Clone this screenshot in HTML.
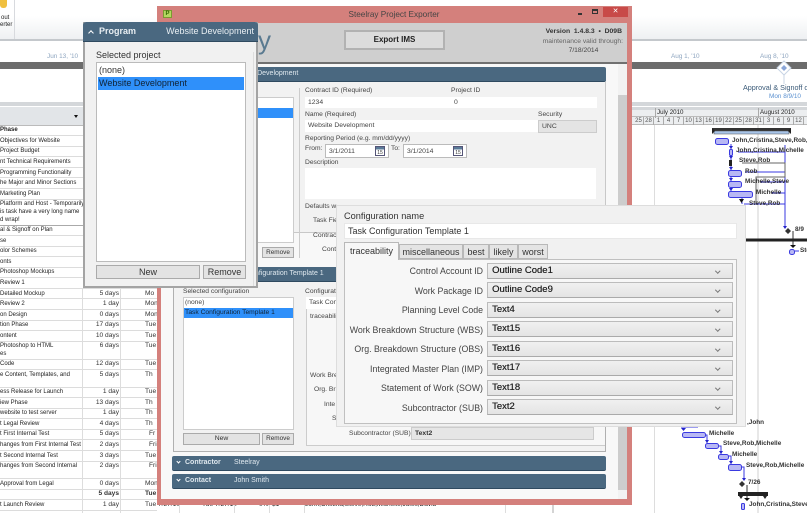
<!DOCTYPE html>
<html><head><meta charset="utf-8"><style>
html,body{margin:0;padding:0}
body{width:807px;height:513px;position:relative;overflow:hidden;background:#fff;font-family:"Liberation Sans",sans-serif;color:#333}
div{position:absolute;box-sizing:border-box;white-space:nowrap}
#all{left:0;top:0;width:807px;height:513px;filter:blur(.35px);overflow:hidden}
.t{font-size:6px;line-height:10px;height:10px;color:#222}
.d{font-size:6.6px;line-height:10px;height:10px;color:#333;width:50px;left:69px;text-align:right}
.s{font-size:6.6px;line-height:10px;height:10px;color:#333;left:145px}
.h{left:0;width:157px;height:1px;background:#dcdcdc}
.g{font-size:6.4px;line-height:10px;color:#333;font-weight:bold}
.c{font-size:6px;line-height:8px;color:#555;text-align:center;width:10px;top:117px;height:8px;border-right:1px solid #aaa}
.l{font-size:6.7px;line-height:10px;height:10px;color:#444}
.inp{background:#fff;font-size:6.8px;line-height:11px;color:#444;padding-left:3px}
.sec{background:#4a6880;border-radius:2px;border-bottom:1px solid #2f4a60;color:#dfe8ee;font-size:7px;line-height:14px}
.btn{background:#e3e3e3;border:1px solid #aaa;text-align:center;color:#333}
.cl{font-size:8.8px;line-height:14px;height:14px;color:#444;text-align:right;left:333px;width:150px}
.dd{left:487px;width:246px;height:16px;background:linear-gradient(#f0f0f0,#e4e4e4);border:1px solid #bcbcbc;border-bottom-color:#aaa;font-size:9.5px;line-height:13px;color:#222;padding-left:4px;text-shadow:.25px 0 0 #333}
.dd:after{content:"";position:absolute;right:13px;top:5px;width:2.5px;height:2.5px;border-right:1px solid #777;border-bottom:1px solid #777;transform:rotate(45deg)}
.tab{top:244px;height:15px;background:#e4e4e4;border:1px solid #b8b8b8;font-size:9px;line-height:14px;color:#333;text-align:center}
.chev{width:4px;height:4px;border-right:1.500px solid #fff;border-bottom:1.500px solid #fff;transform:rotate(45deg)}
</style></head><body><div id="all">

<!-- ribbon -->
<div style="left:0;top:0;width:807px;height:39px;background:linear-gradient(#fff 40%,#eef0f2)"></div>
<div style="left:14px;top:0;width:1px;height:39px;background:#d8dade"></div>
<div style="left:0;top:39px;width:807px;height:2px;background:#c4c8cc"></div>
<div style="left:0;top:0;width:7px;height:8px;background:#f0c040;border-radius:0 0 3px 3px"></div>
<div class="t" style="left:1px;top:13px;font-size:6px">out</div>
<div class="t" style="left:0;top:20px;font-size:6px">erter</div>

<!-- timeline -->
<div style="left:0;top:62px;width:807px;height:7px;background:#6c6c6c"></div>
<div class="t" style="left:47px;top:52px;color:#8fa6c0;font-size:6.4px">Jun 13, '10</div>
<div class="t" style="left:671px;top:52px;color:#8fa6c0;font-size:6.4px">Aug 1, '10</div>
<div class="t" style="left:760px;top:52px;color:#8fa6c0;font-size:6.4px">Aug 8, '10</div>
<div style="left:0;top:102px;width:807px;height:4px;background:#d4d7da"></div>
<div class="t" style="left:743px;top:83px;color:#3a5a78;font-size:7.2px">Approval &amp; Signoff o</div>
<div class="t" style="left:769px;top:92px;color:#5a90d0;font-size:6.4px">Mon 8/9/10</div>
<svg style="position:absolute;left:776px;top:60px" width="16" height="24"><path d="M8 1 15 8 8 15 1 8Z" fill="#fff" stroke="#c8d4e4"/><path d="M8 5 11 8 8 11 5 8Z" fill="#8aa6d8"/><path d="M8 15V24" stroke="#c8d4e4"/></svg>

<!-- table header -->
<div style="left:0;top:107px;width:157px;height:19px;background:#e2e5e8;border-bottom:1px solid #bbb"></div>
<div style="left:74px;top:115px;width:0;height:0;border:2px solid transparent;border-top:3px solid #111"></div>

<!-- table -->
<div class="t" style="left:0;top:125px;font-weight:bold">Phase</div>
<div class="t" style="left:0;top:136px">Objectives for Website</div>
<div class="t" style="left:0;top:146px">Project Budget</div>
<div class="t" style="left:0;top:157px">nt Technical Requirements</div>
<div class="t" style="left:0;top:168px">Programming Functionality</div>
<div class="t" style="left:0;top:178px">he Major and Minor Sections</div>
<div class="t" style="left:0;top:189px">Marketing Plan</div>
<div class="t" style="left:0;top:199px">Platform and Host - Temporarily</div>
<div class="t" style="left:0;top:207px">is task have a very long name</div>
<div class="t" style="left:0;top:215px">d wrap!</div>
<div class="t" style="left:0;top:225px">al &amp; Signoff on Plan</div>
<div class="t" style="left:0;top:236px">se</div>
<div class="t" style="left:0;top:246px">olor Schemes</div>
<div class="t" style="left:0;top:257px">onts</div>
<div class="t" style="left:0;top:267px">Photoshop Mockups</div>
<div class="t" style="left:0;top:278px">Review 1</div>
<div class="t" style="left:0;top:289px">Detailed Mockup</div><div class="d" style="top:289px">5 days</div><div class="s" style="top:289px">Mo</div>
<div class="t" style="left:0;top:299px">Review 2</div><div class="d" style="top:299px">1 day</div><div class="s" style="top:299px">Mon</div>
<div class="t" style="left:0;top:310px">on Design</div><div class="d" style="top:310px">0 days</div><div class="s" style="top:310px">Mon</div>
<div class="t" style="left:0;top:320px">tion Phase</div><div class="d" style="top:320px">17 days</div><div class="s" style="top:320px">Tue</div>
<div class="t" style="left:0;top:331px">ontent</div><div class="d" style="top:331px">10 days</div><div class="s" style="top:331px">Tue</div>
<div class="t" style="left:0;top:341px">Photoshop to HTML</div><div class="d" style="top:341px">6 days</div><div class="s" style="top:341px">Tue</div>
<div class="t" style="left:0;top:349px">es</div>
<div class="t" style="left:0;top:359px">Code</div><div class="d" style="top:359px">12 days</div><div class="s" style="top:359px">Tue</div>
<div class="t" style="left:0;top:370px">e Content, Templates, and</div><div class="d" style="top:370px">5 days</div><div class="s" style="top:370px">Th</div>
<div class="t" style="left:0;top:387px">ess Release for Launch</div><div class="d" style="top:387px">1 day</div><div class="s" style="top:387px">Tue</div>
<div class="t" style="left:0;top:398px">iew Phase</div><div class="d" style="top:398px">13 days</div><div class="s" style="top:398px">Th</div>
<div class="t" style="left:0;top:408px">website to test server</div><div class="d" style="top:408px">1 day</div><div class="s" style="top:408px">Th</div>
<div class="t" style="left:0;top:419px">t Legal Review</div><div class="d" style="top:419px">4 days</div><div class="s" style="top:419px">Th</div>
<div class="t" style="left:0;top:429px">t First Internal Test</div><div class="d" style="top:429px">5 days</div><div class="s" style="top:429px;left:149px">Fr</div>
<div class="t" style="left:0;top:440px">hanges from First Internal Test</div><div class="d" style="top:440px">2 days</div><div class="s" style="top:440px;left:149px">Fri</div>
<div class="t" style="left:0;top:451px">t Second Internal Test</div><div class="d" style="top:451px">3 days</div><div class="s" style="top:451px">Tue</div>
<div class="t" style="left:0;top:461px">hanges from Second Internal</div><div class="d" style="top:461px">2 days</div><div class="s" style="top:461px;left:149px">Fri</div>
<div class="t" style="left:0;top:479px">Approval from Legal</div><div class="d" style="top:479px">0 days</div><div class="s" style="top:479px">Mon</div>
<div class="d" style="top:489px;font-weight:bold">5 days</div><div class="s" style="top:489px;font-weight:bold">Tue</div>
<div class="t" style="left:0;top:500px">t Launch Review</div><div class="d" style="top:500px">1 day</div><div class="s" style="top:500px">Tue 7/27/10</div>
<div class="t" style="left:202px;top:500px;font-size:6.6px">Tue 7/27/10</div>
<div class="t" style="left:259px;top:500px;font-size:6.6px">0%</div><div class="t" style="left:272px;top:500px;font-size:6.6px">$1</div>
<div class="t" style="left:305px;top:500px;font-size:6.5px">John,Cristina,Steve,Rob,Michelle,Jules,David</div>

<div class="h" style="top:135px"></div><div class="h" style="top:146px"></div><div class="h" style="top:156px"></div><div class="h" style="top:167px"></div><div class="h" style="top:177px"></div><div class="h" style="top:188px"></div><div class="h" style="top:199px"></div>
<div class="h" style="top:225px;background:#aaa"></div><div class="h" style="top:235px"></div><div class="h" style="top:246px"></div><div class="h" style="top:256px"></div><div class="h" style="top:267px"></div><div class="h" style="top:277px"></div><div class="h" style="top:288px"></div><div class="h" style="top:298px"></div><div class="h" style="top:309px"></div><div class="h" style="top:320px"></div><div class="h" style="top:330px"></div><div class="h" style="top:341px"></div><div class="h" style="top:359px"></div><div class="h" style="top:369px"></div><div class="h" style="top:387px"></div><div class="h" style="top:397px"></div><div class="h" style="top:408px"></div><div class="h" style="top:418px"></div><div class="h" style="top:429px"></div><div class="h" style="top:439px"></div><div class="h" style="top:450px"></div><div class="h" style="top:461px"></div><div class="h" style="top:478px"></div><div class="h" style="top:489px"></div><div class="h" style="top:499px"></div><div class="h" style="top:510px"></div>
<div style="left:82px;top:288px;width:1px;height:225px;background:#ddd"></div>
<div style="left:120px;top:288px;width:1px;height:225px;background:#ddd"></div>
<div style="left:179px;top:505px;width:1px;height:8px;background:#ddd"></div>
<div style="left:234px;top:505px;width:1px;height:8px;background:#ddd"></div>
<div style="left:269px;top:505px;width:1px;height:8px;background:#ddd"></div>
<div style="left:304px;top:505px;width:1px;height:8px;background:#ddd"></div>
<div style="left:505px;top:505px;width:1px;height:8px;background:#ddd"></div>
<div style="left:552px;top:505px;width:2px;height:8px;background:#d4d4d4"></div>

<!-- gantt header -->
<div style="left:630px;top:107px;width:177px;height:3px;background:#d4d7da"></div>
<div style="left:630px;top:110px;width:177px;height:15px;background:#eceef0;border-bottom:1px solid #bbb"></div>
<div style="left:630px;top:116px;width:177px;height:1px;background:#bbb"></div>
<div class="t" style="left:655px;top:108px;font-size:6.2px;border-left:1px solid #aaa;padding-left:1px">July 2010</div>
<div class="t" style="left:758px;top:108px;font-size:6.2px;border-left:1px solid #aaa;padding-left:1px">August 2010</div>
<div class="c" style="left:634px">25</div><div class="c" style="left:644px">28</div><div class="c" style="left:654px">1</div><div class="c" style="left:664px">4</div><div class="c" style="left:674px">7</div><div class="c" style="left:684px">10</div><div class="c" style="left:694px">13</div><div class="c" style="left:704px">16</div><div class="c" style="left:714px">19</div><div class="c" style="left:724px">22</div><div class="c" style="left:734px">25</div><div class="c" style="left:744px">28</div><div class="c" style="left:754px">31</div><div class="c" style="left:764px">3</div><div class="c" style="left:774px">6</div><div class="c" style="left:784px">9</div><div class="c" style="left:794px">12</div>

<!-- gantt -->
<div style="left:654px;top:125px;width:1px;height:388px;background:#ddd"></div>
<div style="left:757px;top:125px;width:2px;height:388px;background:#e8e8e8"></div>
<svg style="position:absolute;left:0;top:0" width="807" height="513" fill="none">
<path d="M712 128H791V132H712Z" fill="#333"/><path d="M714 131H789V134H714Z" fill="#a8c4e8" stroke="#555" stroke-width=".6"/>
<path d="M712 128V134L715 131ZM791 128V134L788 131Z" fill="#222"/>
<g stroke="#3a3ae0" fill="#b8b8f4">
<rect x="715.500" y="138.500" width="13" height="6" rx="2"/>
<rect x="729.500" y="149.500" width="3" height="6" rx="1"/>
<rect x="728.500" y="170.500" width="13" height="6" rx="2"/>
<rect x="728.500" y="181.500" width="13" height="6" rx="2"/>
<rect x="728.500" y="191.500" width="24" height="6" rx="2"/>
<rect x="682.500" y="432.500" width="23" height="5" rx="2"/>
<rect x="705.500" y="443.500" width="13" height="5" rx="2"/>
<rect x="718.500" y="454.500" width="10" height="5" rx="2"/>
<rect x="728.500" y="464.500" width="13" height="6" rx="2"/>
<rect x="741.500" y="503.500" width="3" height="6" rx="1"/>
<rect x="789.500" y="249.500" width="5" height="5" rx="2"/>
</g>
<path d="M731 144V149M731 155V160M731 166V170M731 176V181M731 187V191M742 197V204M744 204H785M785 145V226M785 152H738M745 172H785M760 182H785M772 193H785M795 251H799M705 435H707V443M718 446H721V454M728 456H731V464M741 467H744V479M681 427H698" stroke="#3a3ae0"/>
<path d="M729 146l2 3 2-3ZM729 156l2 3 2-3ZM729 167l2 3 2-3ZM729 178l2 3 2-3ZM729 188l2 3 2-3ZM783 226l2 3 2-3ZM705 440l2 3 2-3ZM719 451l2 3 2-3ZM729 461l2 3 2-3ZM742 478l2 3 2-3Z" fill="#22c"/>
<path d="M739 199h5l-2.500 4Z" fill="#111"/><path d="M681 428h5l-2.500 3Z" fill="#22c"/>
<path d="M729 160h3v6h-3Z" fill="#222"/>
<path d="M742 163H785V177H756V204" stroke="#666"/>
<path d="M785 231l3-3 3 3-3 3ZM739 484l3-3 3 3-3 3Z" fill="#333"/>
<path d="M793 231V247" stroke="#333"/><path d="M790 245h6l-3 3Z" fill="#111"/>
<path d="M747 485V498" stroke="#333"/><path d="M744 498h6l-3 3Z" fill="#111"/>
<path d="M738 492H768V496H738ZM739 496l2 3 2-3ZM763 496l2 3 2-3Z" fill="#222"/>
<path d="M746 238.500H807V241.500H746Z" fill="#222"/>
</svg>
<div class="g" style="left:732px;top:136px">John,Cristina,Steve,Rob,</div>
<div class="g" style="left:736px;top:146px">John,Cristina,Michelle</div>
<div class="g" style="left:739px;top:156px">Steve,Rob</div>
<div class="g" style="left:745px;top:167px">Rob</div>
<div class="g" style="left:745px;top:177px">Michelle,Steve</div>
<div class="g" style="left:756px;top:188px">Michelle</div>
<div class="g" style="left:749px;top:199px">Steve,Rob</div>
<div class="g" style="left:795px;top:225px">8/9</div>
<div class="g" style="left:800px;top:246px">Ste</div>
<div class="g" style="left:747px;top:418px">,John</div>
<div class="g" style="left:709px;top:429px">Michelle</div>
<div class="g" style="left:723px;top:439px">Steve,Rob,Michelle</div>
<div class="g" style="left:732px;top:450px">Michelle</div>
<div class="g" style="left:746px;top:461px">Steve,Rob,Michelle</div>
<div class="g" style="left:748px;top:478px">7/26</div>
<div class="g" style="left:749px;top:500px">John,Cristina,Steve</div>

<!-- main window -->
<div style="left:157px;top:6px;width:475px;height:499px;background:#d4807c"></div>
<div style="left:161px;top:23px;width:466px;height:476px;background:#f8f8f8"></div>
<div style="left:163px;top:10px;width:9px;height:8px;background:#b4d860;border:1px solid #7a9a30;font-size:6px;line-height:6px;text-align:center;color:#360;font-weight:bold">P</div>
<div style="left:260px;top:9px;width:268px;text-align:center;font-size:8.2px;line-height:12px;color:#444">Steelray Project Exporter</div>
<div style="left:578px;top:13px;width:4px;height:2px;background:#333"></div>
<div style="left:592px;top:9px;width:6px;height:5px;border:1px solid #333;border-top-width:2px"></div>
<div style="left:603px;top:7px;width:25px;height:10px;background:#c84a48;color:#fff;font-size:7px;line-height:10px;text-align:center">✕</div>
<div style="left:161px;top:23px;width:466px;height:39px;background:#cfcfcf"></div>
<div style="left:161px;top:62px;width:466px;height:2px;background:#707070"></div>
<div style="left:258px;top:25px;font-size:26px;line-height:30px;color:#5a7a90">y</div>
<div class="btn" style="left:344px;top:30px;width:101px;height:20px;font-size:8px;line-height:16px;font-weight:bold;border:2px solid #b2b2b2;background:#dcdcdc;color:#222">Export IMS</div>
<div style="left:500px;top:27px;width:122px;text-align:right;font-size:6.8px;line-height:10px;font-weight:bold;color:#333">Version&nbsp; 1.4.8.3&nbsp; •&nbsp; D09B</div>
<div style="left:500px;top:37px;width:123px;text-align:right;font-size:6.7px;line-height:10px;color:#666">maintenance valid through:</div>
<div style="left:560px;top:46px;width:47px;text-align:center;font-size:6.7px;line-height:10px;color:#444">7/18/2014</div>

<!-- scrollbar -->
<div style="left:618px;top:64px;width:9px;height:435px;background:#f2f2f2"></div>
<div style="left:618px;top:95px;width:9px;height:395px;background:#cdcdcd"></div>

<!-- program section -->
<div class="sec" style="left:172px;top:67px;width:434px;height:15px;padding-left:58px">Website Development</div>
<div style="left:176px;top:82px;width:430px;height:151px;background:#f2f2f2;border:1px solid #c8c8c8;border-top:0"></div>
<div style="left:184px;top:97px;width:110px;height:146px;background:#fff;border:1px solid #ccc"></div>
<div style="left:185px;top:108px;width:108px;height:10px;background:#2f90fa"></div>
<div class="btn" style="left:262px;top:247px;width:32px;height:11px;font-size:6.4px;line-height:9px">Remove</div>
<div style="left:299px;top:88px;width:1px;height:170px;background:#ccc"></div>
<div class="l" style="left:305px;top:86px">Contract ID (Required)</div>
<div class="inp" style="left:305px;top:97px;width:146px;height:11px">1234</div>
<div class="l" style="left:451px;top:86px">Project ID</div>
<div class="inp" style="left:451px;top:97px;width:146px;height:11px">0</div>
<div class="l" style="left:305px;top:110px">Name (Required)</div>
<div class="inp" style="left:305px;top:120px;width:233px;height:12px">Website Development</div>
<div class="l" style="left:538px;top:110px">Security</div>
<div class="inp" style="left:538px;top:120px;width:59px;height:13px;background:#e4e4e4;border:1px solid #ccc">UNC</div>
<div class="l" style="left:305px;top:134px">Reporting Period (e.g. mm/dd/yyyy)</div>
<div class="l" style="left:305px;top:144px">From:</div>
<div class="inp" style="left:325px;top:144px;width:64px;height:14px;border:1px solid #bbb;line-height:13px">3/1/2011</div>
<div style="left:375px;top:146px;width:10px;height:10px;border:1px solid #557;background:linear-gradient(#5a7a98 30%,#fff 30%);font-size:5px;line-height:12px;text-align:center">15</div>
<div class="l" style="left:391px;top:144px">To:</div>
<div class="inp" style="left:403px;top:144px;width:64px;height:14px;border:1px solid #bbb;line-height:13px">3/1/2014</div>
<div style="left:453px;top:146px;width:10px;height:10px;border:1px solid #557;background:linear-gradient(#5a7a98 30%,#fff 30%);font-size:5px;line-height:12px;text-align:center">15</div>
<div class="l" style="left:305px;top:158px">Description</div>
<div class="inp" style="left:305px;top:168px;width:291px;height:31px"></div>
<div class="l" style="left:305px;top:202px">Defaults w</div>
<div class="l" style="left:313px;top:216px">Task Fie</div>
<div class="l" style="left:313px;top:231px">Contrac</div>
<div class="l" style="left:322px;top:245px">Cont</div>

<!-- configuration section -->
<div class="sec" style="left:172px;top:267px;width:434px;height:15px;padding-left:74px">Configuration Template 1</div>
<div style="left:173px;top:282px;width:433px;height:170px;background:#f2f2f2;border:1px solid #b0b0b0;border-top:0"></div>
<div class="l" style="left:183px;top:287px">Selected configuration</div>
<div style="left:183px;top:297px;width:111px;height:133px;background:#fff;border:1px solid #ccc"></div>
<div class="l" style="left:185px;top:298px">(none)</div>
<div style="left:184px;top:308px;width:109px;height:10px;background:#2f90fa"></div>
<div class="l" style="left:185px;top:308px;color:#123">Task Configuration Template 1</div>
<div class="btn" style="left:183px;top:433px;width:77px;height:12px;font-size:6.8px;line-height:10px">New</div>
<div class="btn" style="left:262px;top:433px;width:32px;height:12px;font-size:6.4px;line-height:10px">Remove</div>
<div style="left:306px;top:290px;width:299px;height:156px;border:1px solid #ccc;border-right:0;background:#f7f7f7"></div>
<div class="l" style="left:305px;top:287px;background:#f2f2f2">Configurat</div>
<div class="inp" style="left:306px;top:297px;width:40px;height:12px">Task Conf</div>
<div class="l" style="left:310px;top:312px">traceabili</div>
<div class="l" style="left:310px;top:371px">Work Bre</div>
<div class="l" style="left:314px;top:385px">Org. Br</div>
<div class="l" style="left:324px;top:400px">Inte</div>
<div class="l" style="left:332px;top:414px">S</div>
<div class="l" style="left:349px;top:429px">Subcontractor (SUB)</div>
<div class="inp" style="left:411px;top:427px;width:183px;height:13px;background:#e6e6e6;border:1px solid #ccc;font-weight:bold;color:#333">Text2</div>
<div class="sec" style="left:172px;top:456px;width:434px;height:15px"><span style="position:absolute;left:13px;font-weight:bold">Contractor</span><span style="position:absolute;left:62px">Steelray</span></div>
<div class="chev" style="left:177px;top:460px;width:3px;height:3px"></div>
<div class="sec" style="left:172px;top:474px;width:434px;height:15px"><span style="position:absolute;left:13px;font-weight:bold">Contact</span><span style="position:absolute;left:62px">John Smith</span></div>
<div class="chev" style="left:177px;top:478px;width:3px;height:3px"></div>

<!-- program popup -->
<div style="left:83px;top:22px;width:175px;height:266px;background:#f1f1f1;border:2px solid #a4a4a4;border-top:0"></div>
<div style="left:253px;top:52px;width:1px;height:234px;background:#ddd"></div>
<div style="left:83px;top:22px;width:175px;height:20px;background:#4a6880;border-radius:3px 3px 0 0;border-bottom:1px solid #2f4a60;color:#e8eef2;font-size:9px;line-height:19px;padding-left:16px;font-weight:bold">Program</div>
<div class="chev" style="left:89px;top:31px;transform:rotate(225deg)"></div>
<div style="left:130px;top:22px;width:124px;text-align:right;color:#e8eef2;font-size:9px;line-height:19px">Website Development</div>
<div style="left:96px;top:49px;font-size:9px;line-height:12px;color:#333">Selected project</div>
<div style="left:96px;top:62px;width:150px;height:200px;background:#fff;border:1px solid #bbb"></div>
<div style="left:99px;top:64px;font-size:9px;line-height:13px;color:#333">(none)</div>
<div style="left:98px;top:77px;width:146px;height:13px;background:#2f90fa"></div>
<div style="left:99px;top:77px;font-size:9px;line-height:13px;color:#123">Website Development</div>
<div class="btn" style="left:96px;top:265px;width:104px;height:14px;font-size:9px;line-height:12px">New</div>
<div class="btn" style="left:203px;top:265px;width:43px;height:14px;font-size:9px;line-height:12px">Remove</div>

<!-- config popup -->
<div style="left:336px;top:205px;width:410px;height:222px;background:#f1f1f1;border:1px solid #ddd"></div>
<div style="left:344px;top:209px;font-size:9.2px;line-height:14px;color:#333">Configuration name</div>
<div style="left:344px;top:223px;width:393px;height:16px;background:#fff;border:1px solid #e8e8e8;font-size:9px;line-height:14px;color:#333;padding-left:3px">Task Configuration Template 1</div>
<div style="left:344px;top:259px;width:393px;height:165px;border:1px solid #c0c0c0;background:#f7f7f7"></div>
<div class="tab" style="left:344px;top:242px;width:55px;height:18px;background:#f7f7f7;border-bottom:0;line-height:16px">traceability</div>
<div class="tab" style="left:399px;width:64px">miscellaneous</div>
<div class="tab" style="left:463px;width:26px">best</div>
<div class="tab" style="left:489px;width:29px">likely</div>
<div class="tab" style="left:518px;width:30px">worst</div>
<div class="cl" style="top:264px">Control Account ID</div><div class="dd" style="top:263px">Outline Code1</div>
<div class="cl" style="top:284px">Work Package ID</div><div class="dd" style="top:282px">Outline Code9</div>
<div class="cl" style="top:303px">Planning Level Code</div><div class="dd" style="top:302px">Text4</div>
<div class="cl" style="top:323px">Work Breakdown Structure (WBS)</div><div class="dd" style="top:321px">Text15</div>
<div class="cl" style="top:342px">Org. Breakdown Structure (OBS)</div><div class="dd" style="top:341px">Text16</div>
<div class="cl" style="top:362px">Integrated Master Plan (IMP)</div><div class="dd" style="top:360px">Text17</div>
<div class="cl" style="top:381px">Statement of Work (SOW)</div><div class="dd" style="top:380px">Text18</div>
<div class="cl" style="top:401px">Subcontractor (SUB)</div><div class="dd" style="top:399px">Text2</div>

</div></body></html>
